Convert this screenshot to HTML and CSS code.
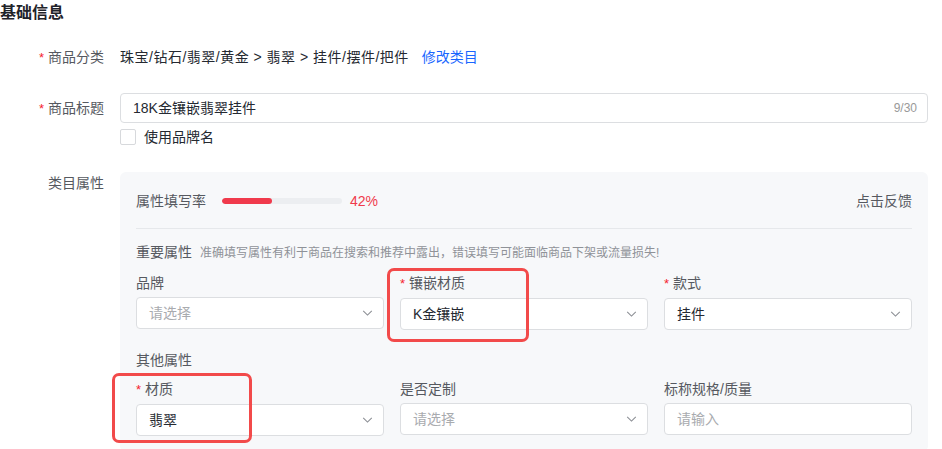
FILE: index.html
```html
<!DOCTYPE html>
<html lang="zh-CN">
<head>
  <meta charset="UTF-8">
  <title>基础信息</title>
  <link rel="stylesheet" href="styles.css">
</head>
<body>
  <h2 class="section-title">基础信息</h2>

  <div class="form-row row-category">
    <div class="form-label"><span class="req">*</span>商品分类</div>
    <div class="form-body">
      <span class="category-path">珠宝/钻石/翡翠/黄金 &gt; 翡翠 &gt; 挂件/摆件/把件</span>
      <a class="link" href="#">修改类目</a>
    </div>
  </div>

  <div class="form-row row-title">
    <div class="form-label label-input"><span class="req">*</span>商品标题</div>
    <div class="form-body">
      <div class="text-input">
        <span class="value">18K金镶嵌翡翠挂件</span>
        <span class="counter">9/30</span>
      </div>
      <label class="check">
        <span class="check-box"></span>
        <span>使用品牌名</span>
      </label>
    </div>
  </div>

  <div class="form-row row-attrs">
    <div class="form-label">类目属性</div>
    <div class="form-body">
      <div class="attr-panel">
        <div class="fill-rate">
          <span class="fill-label">属性填写率</span>
          <div class="progress"><div class="progress-bar" style="width: 42%"></div></div>
          <span class="fill-value">42%</span>
          <a class="feedback" href="#">点击反馈</a>
        </div>

        <div class="group-title">重要属性<span class="group-tip">准确填写属性有利于商品在搜索和推荐中露出，错误填写可能面临商品下架或流量损失!</span></div>
        <div class="attr-grid">
          <div class="field">
            <div class="field-label">品牌</div>
            <div class="select placeholder">请选择<svg class="arrow" viewBox="0 0 12 7"><path d="M1 1l5 5 5-5"/></svg></div>
          </div>
          <div class="field">
            <div class="field-label"><span class="req">*</span>镶嵌材质</div>
            <div class="select">K金镶嵌<svg class="arrow" viewBox="0 0 12 7"><path d="M1 1l5 5 5-5"/></svg></div>
            <div class="mark mark-inlay"></div>
          </div>
          <div class="field">
            <div class="field-label"><span class="req">*</span>款式</div>
            <div class="select">挂件<svg class="arrow" viewBox="0 0 12 7"><path d="M1 1l5 5 5-5"/></svg></div>
          </div>
        </div>

        <div class="group-title group-other">其他属性</div>
        <div class="attr-grid grid-other">
          <div class="field">
            <div class="field-label"><span class="req">*</span>材质</div>
            <div class="select">翡翠<svg class="arrow" viewBox="0 0 12 7"><path d="M1 1l5 5 5-5"/></svg></div>
            <div class="mark mark-material"></div>
          </div>
          <div class="field">
            <div class="field-label">是否定制</div>
            <div class="select placeholder">请选择<svg class="arrow" viewBox="0 0 12 7"><path d="M1 1l5 5 5-5"/></svg></div>
          </div>
          <div class="field">
            <div class="field-label">标称规格/质量</div>
            <div class="select placeholder">请输入</div>
          </div>
        </div>
      </div>
    </div>
  </div>
</body>
</html>
```

FILE: styles.css
```css
body {
  margin: 0;
  width: 942px;
  font-family: "Liberation Sans", "Noto Sans CJK SC", sans-serif;
  font-size: 14px;
  color: #252931;
  background: #fff;
}

.section-title {
  margin: 0;
  font-size: 16px;
  font-weight: bold;
  line-height: 26px;
  color: #1f2329;
}

.form-row {
  display: flex;
  align-items: flex-start;
}
.row-category {
  margin-top: 20px;
}
.row-title {
  margin-top: 24px;
}
.row-attrs {
  margin-top: 24px;
}

.form-label {
  width: 104px;
  flex: none;
  padding-right: 16px;
  text-align: right;
  line-height: 22px;
  color: #565960;
}
.label-input {
  line-height: 30px;
}
.req {
  color: #f5222d;
  margin-right: 4px;
  font-size: 13px;
}

.form-body {
  flex: 1;
  line-height: 22px;
}

.category-path {
  color: #252931;
  letter-spacing: 0.5px;
}
.link {
  margin-left: 9px;
  color: #1966ff;
  text-decoration: none;
}

.text-input {
  width: 808px;
  height: 30px;
  box-sizing: border-box;
  border: 1px solid #dcdee1;
  border-radius: 4px;
  display: flex;
  align-items: center;
  justify-content: space-between;
  padding: 0 10px 0 12px;
}
.counter {
  font-size: 12px;
  color: #999;
}

.check {
  display: flex;
  align-items: center;
  margin-top: 3px;
  color: #252931;
}
.check-box {
  width: 16px;
  height: 16px;
  box-sizing: border-box;
  border: 1px solid #d7d9dc;
  border-radius: 2px;
  background: #fff;
  margin-right: 8px;
}

.attr-panel {
  width: 808px;
  box-sizing: border-box;
  background: #f7f8fa;
  border-radius: 6px;
  padding: 18px 16px 16px;
}

.fill-rate {
  display: flex;
  align-items: center;
  padding-bottom: 16px;
  border-bottom: 1px solid #e6e8eb;
  color: #565960;
}
.progress {
  width: 120px;
  height: 6px;
  margin-left: 16px;
  border-radius: 3px;
  background: #eceef1;
  overflow: hidden;
}
.progress-bar {
  height: 100%;
  border-radius: 3px;
  background: #f03a4c;
}
.fill-value {
  margin-left: 8px;
  color: #f03a4c;
}
.feedback {
  margin-left: auto;
  color: #565960;
  text-decoration: none;
}

.group-title {
  margin-top: 12px;
  color: #565960;
}
.group-tip {
  margin-left: 8px;
  font-size: 12px;
  color: #8f9298;
}
.group-other {
  margin-top: 19px;
}

.attr-grid {
  display: grid;
  grid-template-columns: repeat(3, 1fr);
  gap: 16px;
  margin-top: 8px;
}
.grid-other {
  margin-top: 7px;
}

.field {
  position: relative;
}
.field-label {
  color: #565960;
}
.select {
  margin-top: 3px;
  height: 32px;
  box-sizing: border-box;
  border: 1px solid #dcdee1;
  border-radius: 4px;
  background: #fff;
  display: flex;
  align-items: center;
  justify-content: space-between;
  padding: 0 10px 0 12px;
  color: #252931;
}
.select.placeholder {
  color: #a9abaf;
}
.arrow {
  width: 11px;
  height: 6px;
  fill: none;
  stroke: #8a8d93;
  stroke-width: 1.2;
}

.mark {
  position: absolute;
  border: 3px solid #f24a4a;
  border-radius: 7px;
  box-sizing: border-box;
}
.mark-inlay {
  left: -13px;
  top: -4px;
  width: 142px;
  height: 74px;
}
.mark-material {
  left: -24px;
  top: -5px;
  width: 140px;
  height: 70px;
}
```
